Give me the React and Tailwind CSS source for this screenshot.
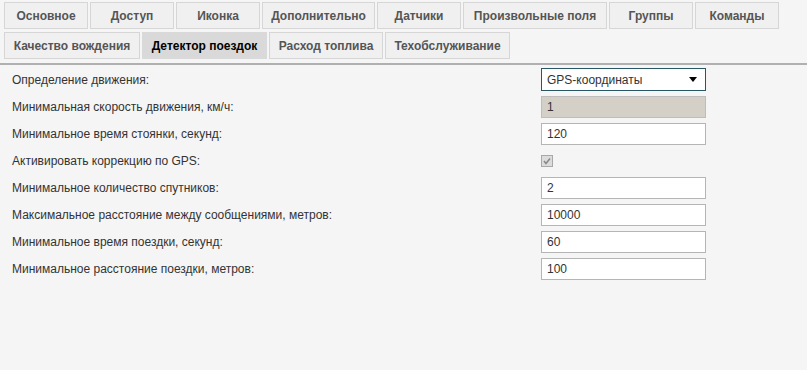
import React from "react";

const tabsTop = [
  { label: "Основное", w: "w-[84px]" },
  { label: "Доступ", w: "w-[84px]" },
  { label: "Иконка", w: "w-[84px]" },
  { label: "Дополнительно", w: "w-[113px]" },
  { label: "Датчики", w: "w-[84px]" },
  { label: "Произвольные поля", w: "w-[144px]" },
  { label: "Группы", w: "w-[84px]" },
  { label: "Команды", w: "w-[84px]" },
];

const tabsBottom = [
  { label: "Качество вождения", w: "w-[136px]" },
  { label: "Детектор поездок", w: "w-[125px]", active: true },
  { label: "Расход топлива", w: "w-[114px]" },
  { label: "Техобслуживание", w: "w-[125px]" },
];

const rows = [
  { label: "Определение движения:", type: "select", value: "GPS-координаты" },
  { label: "Минимальная скорость движения, км/ч:", type: "disabled", value: "1" },
  { label: "Минимальное время стоянки, секунд:", type: "input", value: "120" },
  { label: "Активировать коррекцию по GPS:", type: "check" },
  { label: "Минимальное количество спутников:", type: "input", value: "2" },
  { label: "Максимальное расстояние между сообщениями, метров:", type: "input", value: "10000" },
  { label: "Минимальное время поездки, секунд:", type: "input", value: "60" },
  { label: "Минимальное расстояние поездки, метров:", type: "input", value: "100" },
];

const Tab = ({ label, w, active }) => (
  <div
    className={`${w} h-[27px] flex items-center justify-center border text-[12px] font-bold ${
      active
        ? "bg-[#d9d9d9] border-[#d9d9d9] text-black"
        : "bg-[#f0f0f0] border-[#d6d6d6] text-[#555]"
    }`}
  >
    {label}
  </div>
);

const Field = ({ type, value }) => {
  if (type === "select") {
    return (
      <div className="w-[165px] h-[23px] bg-white border border-[#275767] flex items-center justify-between pl-[5px] pr-[8px] text-[12px] text-[#333]">
        <span>{value}</span>
        <span className="w-0 h-0 border-l-[4px] border-r-[4px] border-t-[5px] border-l-transparent border-r-transparent border-t-black" />
      </div>
    );
  }
  if (type === "disabled") {
    return (
      <div className="w-[165px] h-[22px] bg-[#d4d0c8] border border-[#bdbdbd] flex items-center pl-[5px] text-[12px] text-[#333]">
        {value}
      </div>
    );
  }
  if (type === "check") {
    return (
      <div className="w-[12px] h-[12px] border border-[#a8a8a8] bg-[#dcdcdc] flex items-center justify-center">
        <svg width="10" height="10" viewBox="0 0 10 10">
          <path d="M2 5 L4 7.5 L8 2.5" fill="none" stroke="#8a8a8a" strokeWidth="1.6" />
        </svg>
      </div>
    );
  }
  return (
    <div className="w-[165px] h-[22px] bg-white border border-[#b5b5b5] flex items-center pl-[5px] text-[12px] text-[#333]">
      {value}
    </div>
  );
};

export default function App() {
  return (
    <div
      className="w-[807px] h-[370px] bg-[#f5f5f5] overflow-hidden"
      style={{ fontFamily: '"Liberation Sans", Arial, sans-serif' }}
    >
      <div className="pl-[4px] pt-[2px] flex flex-col gap-[3px]">
        <div className="flex gap-[2px]">
          {tabsTop.map((t) => (
            <Tab key={t.label} {...t} />
          ))}
        </div>
        <div className="flex gap-[2px]">
          {tabsBottom.map((t) => (
            <Tab key={t.label} {...t} />
          ))}
        </div>
      </div>
      <div className="mt-[4px] h-[2px] bg-[#b0b0b0]" />
      <div className="pt-[1px] flex flex-col">
        {rows.map((r) => (
          <div key={r.label} className="h-[27px] flex items-center">
            <div className="w-[541px] pl-[12px] text-[12px] text-[#333]">{r.label}</div>
            <Field type={r.type} value={r.value} />
          </div>
        ))}
      </div>
    </div>
  );
}
